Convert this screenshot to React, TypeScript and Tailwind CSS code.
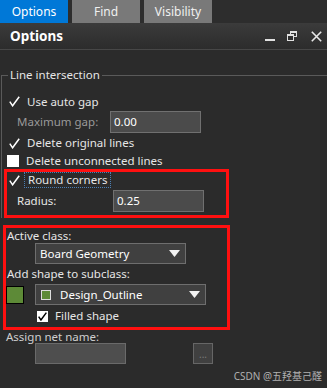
import React from 'react';

const font = { fontFamily: '"Noto Sans", "Open Sans", sans-serif' };

function Tick({ color = '#ffffff' }: { color?: string }) {
  return (
    <svg width="11" height="11" viewBox="0 0 11 11" className="shrink-0">
      <polyline points="0.8,5.6 3.6,9.8 10.2,0.8" fill="none" stroke={color} strokeWidth="1.5" strokeLinejoin="miter" />
    </svg>
  );
}

function Check({ checked, label, focus }: { checked: boolean; label: string; focus?: boolean }) {
  return (
    <div className="flex items-center h-full">
      <div className="w-[12px] h-[12px] flex items-center justify-center">
        {checked ? <Tick /> : <div className="w-[12px] h-[12px] bg-white" />}
      </div>
      <span className={focus ? 'ml-[4px] px-[3px] border border-dotted border-[#4a7fb5] leading-[12px] py-[1px]' : 'ml-[7px]'}>{label}</span>
    </div>
  );
}

function Arrow() {
  return (
    <svg width="11" height="7" viewBox="0 0 11 7">
      <polygon points="0,0 11,0 5.5,7" fill="#f2f2f2" />
    </svg>
  );
}

export default function App() {
  return (
    <div className="relative w-[327px] h-[388px] bg-[#2b2b2b] overflow-hidden text-[11.5px] text-[#e6e6e6]" style={font}>
      {/* tabs */}
      <div className="flex h-[23px] gap-[4px] bg-[#2d2d2d] text-[12px]">
        <div className="w-[68px] bg-[#0078d7] text-white flex items-center justify-center">Options</div>
        <div className="w-[68px] bg-[#797979] text-[#f0f0f0] flex items-center justify-center">Find</div>
        <div className="w-[68px] bg-[#797979] text-[#f0f0f0] flex items-center justify-center">Visibility</div>
      </div>

      {/* title bar */}
      <div className="h-[27px] flex items-center bg-gradient-to-b from-[#3b3b3b] to-[#2c2c2c] border-b border-[#474747]">
        <span className="ml-[10px] text-[13.5px] font-bold text-white">Options</span>
        <div className="ml-auto flex items-center">
          <svg width="12" height="12" viewBox="0 0 12 12" className="mr-[11px]">
            <rect x="1" y="9" width="10" height="2" fill="#e0e0e0" />
          </svg>
          <svg width="11" height="10" viewBox="0 0 11 10" className="mr-[13px]">
            <rect x="3.5" y="0.5" width="6" height="5" fill="none" stroke="#e0e0e0" />
            <rect x="3.5" y="0.5" width="6" height="1.5" fill="#e0e0e0" />
            <rect x="0.5" y="3.5" width="6" height="6" fill="#2f2f2f" stroke="#e0e0e0" />
            <rect x="0.5" y="3.5" width="6" height="1.5" fill="#e0e0e0" />
          </svg>
          <svg width="11" height="11" viewBox="0 0 11 11" className="mr-[5px]">
            <path d="M0.8 0.8 L10.2 10.2 M10.2 0.8 L0.8 10.2" stroke="#e8e8e8" strokeWidth="1.6" />
          </svg>
        </div>
      </div>

      {/* group box */}
      <fieldset className="ml-[1px] mt-[17px] border border-b-0 border-r-0 border-[#5a5a5a] w-[330px]">
        <legend className="ml-[6px] px-[2px] leading-[16px]">Line intersection</legend>
        <div className="pt-[9px]">
          <div className="h-[19px] pl-[6px]"><Check checked label="Use auto gap" /></div>
          <div className="h-[22px] flex items-center">
            <span className="ml-[15px] w-[93px] text-[#9a9a9a]">Maximum gap:</span>
            <div className="w-[91px] h-[22px] bg-[#4b4b4b] border border-[#707070] flex items-center pl-[3px] text-white">0.00</div>
          </div>
          <div className="h-[20px] pl-[6px]"><Check checked label="Delete original lines" /></div>
          <div className="h-[16px] pl-[5px]"><Check checked={false} label="Delete unconnected lines" /></div>

          <div className="ml-[2px] w-[225px] h-[49px] border-[3px] border-[#ff1010]">
            <div className="h-[16px] pl-[1px]"><Check checked focus label="Round corners" /></div>
            <div className="mt-[2px] h-[22px] flex items-center">
              <span className="ml-[10px] w-[96px]">Radius:</span>
              <div className="w-[91px] h-[22px] bg-[#4b4b4b] border border-[#707070] flex items-center pl-[3px] text-white">0.25</div>
            </div>
          </div>
        </div>
      </fieldset>

      {/* active class box */}
      <div className="ml-[3px] mt-[7px] w-[227px] h-[105px] border-[3px] border-[#ff1010]">
        <div className="h-[15px] pl-[1px] flex items-center">Active class:</div>
        <div className="ml-[29px] w-[151px] h-[21px] bg-[#404040] border border-[#6e6e6e] flex items-center pl-[4px] pr-[5px]">
          <span className="text-white">Board Geometry</span>
          <span className="ml-auto flex"><Arrow /></span>
        </div>
        <div className="h-[20px] pl-[1px] flex items-center">Add shape to subclass:</div>
        <div className="h-[21px] flex items-center">
          <div className="w-[18px] h-[18px] bg-[#5d8a37] border border-black" />
          <div className="ml-[11px] w-[171px] h-[21px] bg-[#404040] border border-[#6e6e6e] flex items-center pl-[5px] pr-[5px]">
            <div className="w-[10px] h-[10px] bg-[#5d8a37] border border-[#dcdcdc]" />
            <span className="ml-[9px] text-white">Design_Outline</span>
            <span className="ml-auto flex"><Arrow /></span>
          </div>
        </div>
        <div className="h-[22px] flex items-center pl-[31px]">
          <div className="w-[11px] h-[11px] bg-white flex items-center justify-center">
            <svg width="9" height="9" viewBox="0 0 11 11">
              <polyline points="0.8,5.6 3.6,9.8 10.2,0.8" fill="none" stroke="#000" strokeWidth="1.8" />
            </svg>
          </div>
          <span className="ml-[7px]">Filled shape</span>
        </div>
      </div>

      <div className="h-[13px] pl-[6px] flex items-center text-[#cfcfcf]">Assign net name:</div>
      <div className="flex items-center h-[21px]">
        <div className="ml-[35px] w-[91px] h-[21px] bg-[#4e4e4e] border border-[#6a6a6a]" />
        <div className="ml-[67px] w-[20px] h-[21px] bg-[#404040] border border-[#666] flex items-center justify-center text-[#7a7a7a] text-[10px] leading-none">...</div>
      </div>

      {/* watermark */}
      <div className="absolute right-[5px] bottom-[5px] text-[10px] leading-[14px] text-[#b0b0b0]" style={{ fontFamily: '"Noto Sans", "Noto Sans CJK SC", sans-serif' }}>
        CSDN @五羟基己醛
      </div>
    </div>
  );
}
